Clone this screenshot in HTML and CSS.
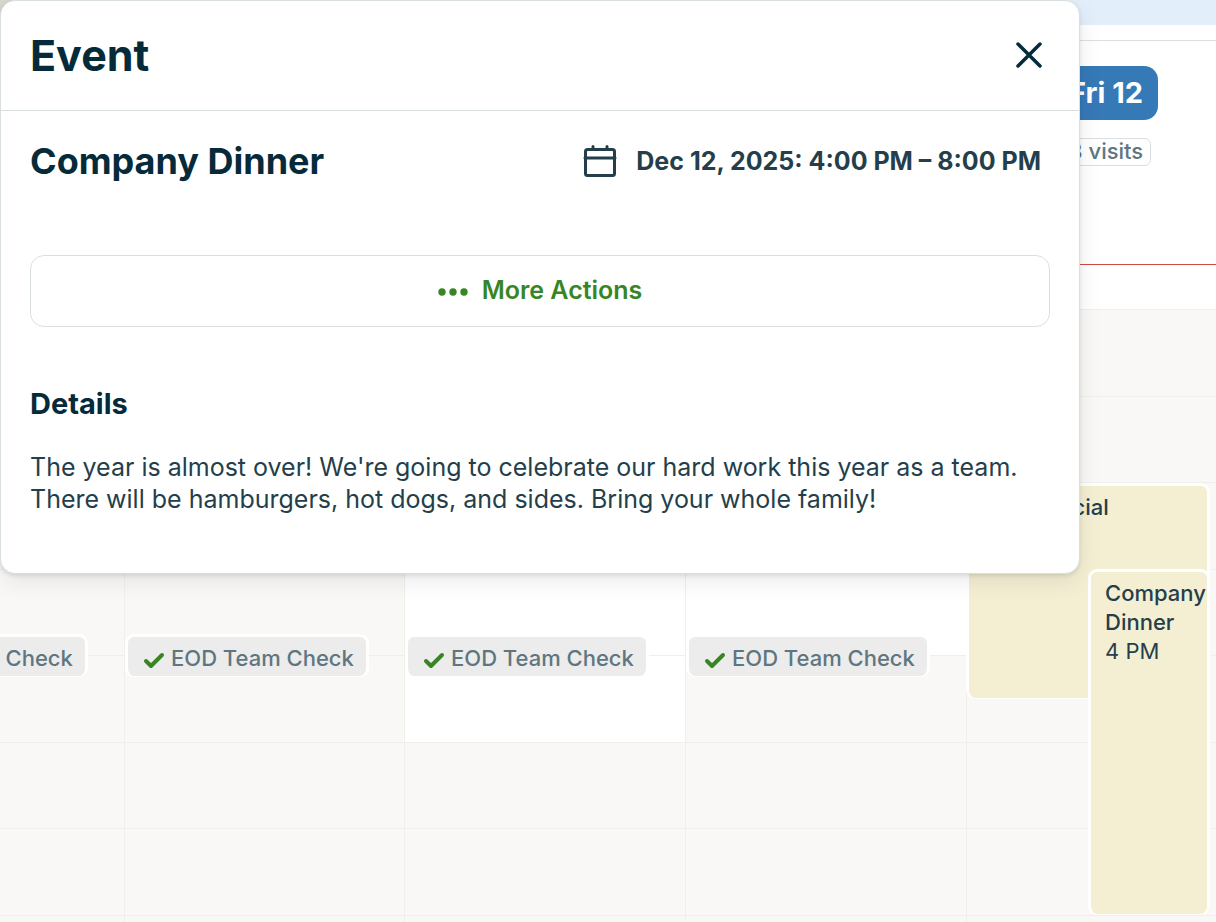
FILE: index.html
```
<!DOCTYPE html>
<html lang="en">

<head>
    <meta charset="UTF-8">
    <meta name="viewport" content="width=device-width, initial-scale=1.0">
    <title>Schedule</title>
    <link rel="stylesheet" href="styles.css">
</head>

<body>

    <main class="calendar">
        <div class="top-strip"></div>

        <div class="day-headers">
            <div class="day-header today">
                <button type="button" class="day-button">Fri 12</button>
                <span class="visits">8 visits</span>
            </div>
        </div>
        <div class="anytime"></div>

        <div class="days">
            <div class="day">
                <div class="hour"><div class="slot"></div><div class="slot"></div></div>
                <div class="hour"><div class="slot"></div><div class="slot"></div></div>
                <div class="hour"><div class="slot"></div><div class="slot"></div></div>
                <div class="hour"><div class="slot"></div><div class="slot"></div></div>
                <div class="task">
                    <svg class="check" viewBox="0 0 22 18"><path d="M3 10l5 5L19 4"/></svg>
                    <span>EOD Team Check</span>
                </div>
            </div>

            <div class="day">
                <div class="hour"><div class="slot"></div><div class="slot"></div></div>
                <div class="hour"><div class="slot"></div><div class="slot"></div></div>
                <div class="hour"><div class="slot"></div><div class="slot"></div></div>
                <div class="hour"><div class="slot"></div><div class="slot"></div></div>
                <div class="task">
                    <svg class="check" viewBox="0 0 22 18"><path d="M3 10l5 5L19 4"/></svg>
                    <span>EOD Team Check</span>
                </div>
            </div>

            <div class="day">
                <div class="hour"><div class="slot open"></div><div class="slot open"></div></div>
                <div class="hour"><div class="slot open"></div><div class="slot open"></div></div>
                <div class="hour"><div class="slot open"></div><div class="slot"></div></div>
                <div class="hour"><div class="slot"></div><div class="slot"></div></div>
                <div class="task">
                    <svg class="check" viewBox="0 0 22 18"><path d="M3 10l5 5L19 4"/></svg>
                    <span>EOD Team Check</span>
                </div>
            </div>

            <div class="day">
                <div class="hour"><div class="slot open"></div><div class="slot open"></div></div>
                <div class="hour"><div class="slot open"></div><div class="slot open"></div></div>
                <div class="hour"><div class="slot"></div><div class="slot"></div></div>
                <div class="hour"><div class="slot"></div><div class="slot"></div></div>
                <div class="task">
                    <svg class="check" viewBox="0 0 22 18"><path d="M3 10l5 5L19 4"/></svg>
                    <span>EOD Team Check</span>
                </div>
            </div>

            <div class="day">
                <div class="hour"><div class="slot"></div><div class="slot"></div></div>
                <div class="hour"><div class="slot"></div><div class="slot"></div></div>
                <div class="hour"><div class="slot"></div><div class="slot"></div></div>
                <div class="hour"><div class="slot"></div><div class="slot"></div></div>
                <div class="event commercial">
                    <strong>Commercial</strong>
                </div>
                <div class="event dinner">
                    <strong>Company Dinner</strong>
                    <span>4 PM</span>
                </div>
            </div>
        </div>
    </main>

    <section class="modal" role="dialog" aria-labelledby="modalTitle">
        <header class="modal-header">
            <h1 id="modalTitle">Event</h1>
            <button type="button" class="close" aria-label="Close">
                <svg viewBox="0 0 28 28"><path d="M3 3l22 22M25 3L3 25"/></svg>
            </button>
        </header>

        <div class="modal-body">
            <div class="summary">
                <h2>Company Dinner</h2>
                <div class="date">
                    <svg class="calendar-icon" viewBox="0 0 34 34">
                        <rect x="2.5" y="5.5" width="29" height="26" rx="2"/>
                        <path d="M2 14h30M10 2.500v3M24 2.500v3"/>
                    </svg>
                    <time datetime="2025-12-12T16:00">Dec 12, 2025: 4:00 PM – 8:00 PM</time>
                </div>
            </div>

            <button type="button" class="more-actions">
                <svg viewBox="0 0 30 8"><circle cx="4" cy="4" r="3.700"/><circle cx="15" cy="4" r="3.700"/><circle cx="26" cy="4" r="3.700"/></svg>
                More Actions
            </button>

            <h3>Details</h3>
            <p>The year is almost over! We're going to celebrate our hard work this year as a team. There will be hamburgers, hot dogs, and sides. Bring your whole family!</p>
        </div>
    </section>

</body>

</html>
```

FILE: styles.css
```
* {
    box-sizing: border-box;
}

body {
    font-family: Inter, sans-serif;
    margin: 0;
    height: 100vh;
    overflow: hidden;
    background-color: #fff;
    color: #243f4b;
}

h1,
h2,
h3,
p {
    margin: 0;
}

button {
    font-family: inherit;
    cursor: pointer;
}

/* Calendar */
/* the last day runs past the right edge of the window */
.calendar {
    height: 100vh;
    margin-right: -31px;
    overflow: hidden;
}

.top-strip {
    height: 25px;
    background-color: #e2effb;
    border-left: 20px solid #dad7cd;
}

.day-headers {
    display: grid;
    grid-template-columns: 965fr 282fr;
    height: 224px;
    margin-top: 15px;
    padding-top: 25px;
    border-top: 1px solid #dadfe2;
}

.day-header {
    grid-column: 2;
    display: flex;
    flex-direction: column;
    align-items: center;
    gap: 18px;
}

.day-button {
    height: 54px;
    padding: 0 15px 2px;
    border: none;
    border-radius: 14px;
    background-color: #3679b7;
    color: #fff;
    font-size: 29px;
    font-weight: 700;
}

.visits {
    height: 28px;
    padding: 0 7px;
    border: 1px solid #dadfe2;
    border-radius: 6px;
    color: #5f7680;
    font-size: 22px;
    font-weight: 500;
    line-height: 24px;
}

.anytime {
    height: 45px;
    border-top: 1px solid #cf4a41;
}

.days {
    display: grid;
    grid-template-columns: 124fr 280fr 281fr 281fr 281fr;
}

.day {
    position: relative;
    border-left: 1px solid #f0efec;
}

.day:first-child {
    border-left: none;
}

.hour {
    display: flex;
    flex-direction: column;
    height: 173px;
}

.slot {
    flex: 1;
    border-top: 1px solid #f0efea;
    background-color: #f9f8f6;
}

.slot.open {
    background-color: #fff;
}

.task,
.event {
    position: absolute;
    border: 3px solid #fff;
    border-bottom-width: 1px;
    border-radius: 9px;
    font-size: 22px;
    line-height: 29px;
}

.task {
    top: 325px;
    left: 0;
    display: flex;
    align-items: center;
    gap: 6px;
    width: 244px;
    height: 43px;
    padding: 3px 0 0 15px;
    background-color: #ececec;
    color: #5f7680;
    font-weight: 500;
    white-space: nowrap;
}

.day:first-child .task {
    left: auto;
    right: 36px;
}

.check {
    width: 22px;
    height: 18px;
    margin-top: 3px;
    fill: none;
    stroke: #388523;
    stroke-width: 4;
    stroke-linecap: round;
    stroke-linejoin: round;
}

.event {
    right: 37px;
    padding: 7px 0 0 14px;
    background-color: #f4efd3;
}

.event strong {
    display: block;
    font-weight: 500;
}

.commercial {
    top: 174px;
    left: -1px;
    height: 216px;
}

.dinner {
    top: 260px;
    width: 122px;
    height: 346px;
}

/* Modal */
.modal {
    position: absolute;
    top: 0;
    left: 0;
    width: 1080px;
    max-width: 100%;
    border: 1px solid #d9dfe1;
    border-radius: 15px;
    background-color: #fff;
    box-shadow: 0 2px 4px rgba(0, 0, 0, 0.1), 0 8px 24px rgba(0, 0, 0, 0.08);
}

.modal-header {
    display: flex;
    align-items: center;
    justify-content: space-between;
    height: 110px;
    padding: 0 36px 2px 29px;
    border-bottom: 1px solid #d9dfe1;
}

h1,
h2,
h3 {
    color: #052b3a;
    font-weight: 700;
}

h1 {
    font-size: 43px;
}

.close {
    display: flex;
    padding: 0;
    border: none;
    background: none;
}

.close svg {
    width: 28px;
    height: 28px;
    stroke: #052b3a;
    stroke-width: 3.5;
    stroke-linecap: round;
}

.modal-body {
    padding: 28px 29px 58px;
}

.summary {
    display: flex;
    align-items: center;
    justify-content: space-between;
    padding-right: 9px;
}

h2 {
    font-size: 36px;
    line-height: 44px;
}

.date {
    display: flex;
    align-items: center;
    gap: 19px;
    font-size: 25px;
    font-weight: 700;
}

.calendar-icon {
    width: 34px;
    height: 34px;
    fill: none;
    stroke: #243f4b;
    stroke-width: 3;
    stroke-linecap: round;
}

.more-actions {
    display: flex;
    align-items: center;
    justify-content: center;
    gap: 14px;
    width: 100%;
    height: 72px;
    margin: 72px 0 60px;
    padding-bottom: 3px;
    border: 1px solid #d9dfe1;
    border-radius: 14px;
    background-color: #fff;
    color: #388523;
    font-size: 25px;
    font-weight: 600;
}

.more-actions svg {
    width: 30px;
    height: 8px;
    margin-top: 3px;
    fill: #388523;
}

h3 {
    margin-bottom: 30px;
    font-size: 29px;
    line-height: 34px;
}

p {
    font-size: 25px;
    line-height: 32px;
}
```
